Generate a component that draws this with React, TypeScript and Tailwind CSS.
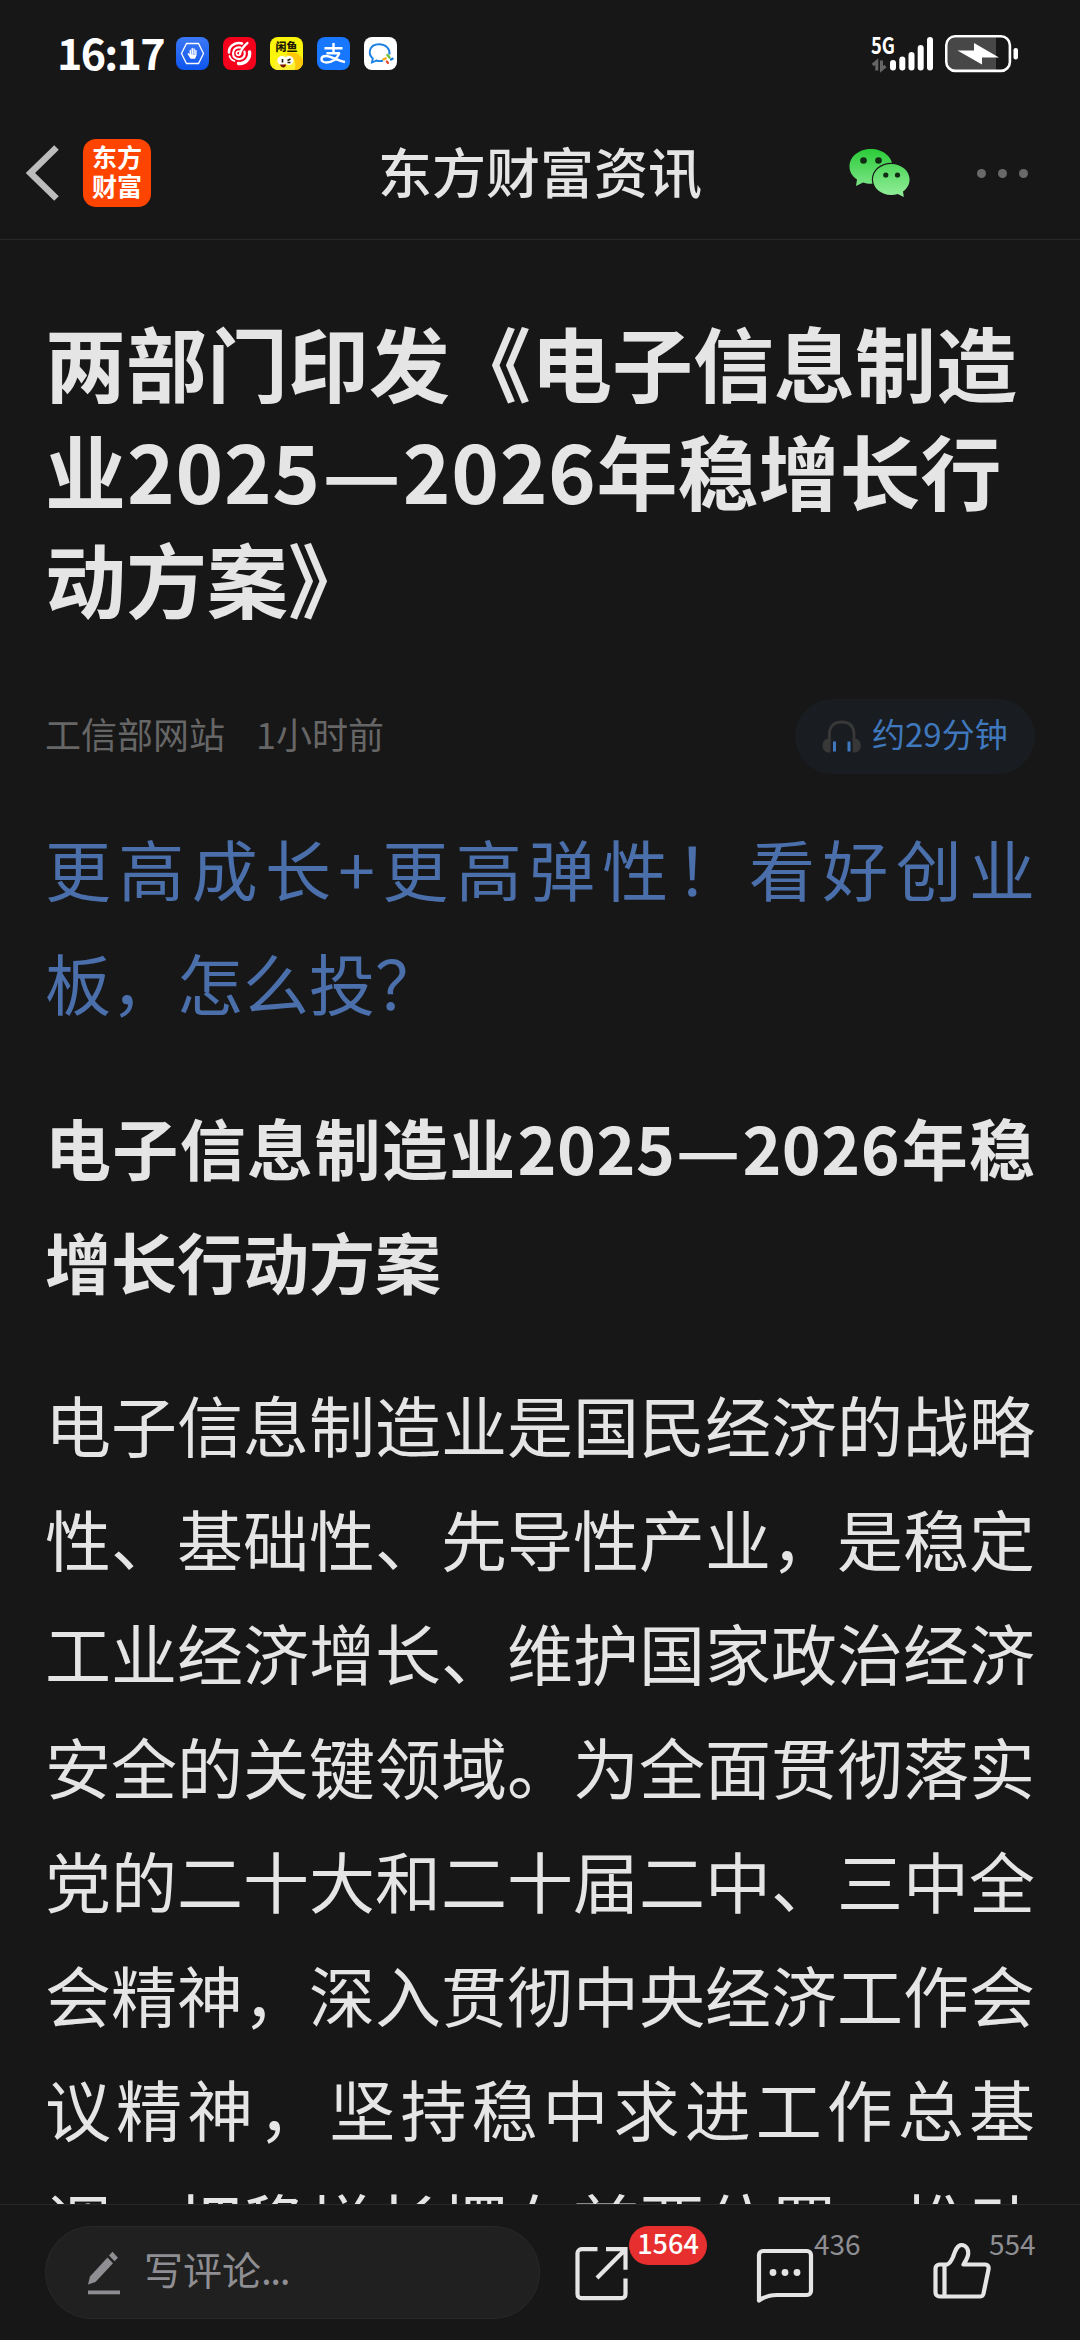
import type { ReactNode } from "react";

const TITLE = ["两部门印发《电子信息制造", "业2025—2026年稳增长行", "动方案》"];

const PROMO = ["更高成长+更高弹性！看好创业", "板，怎么投？"];

const HEADING = ["电子信息制造业2025—2026年稳", "增长行动方案"];

const BODY = [
  "电子信息制造业是国民经济的战略",
  "性、基础性、先导性产业，是稳定",
  "工业经济增长、维护国家政治经济",
  "安全的关键领域。为全面贯彻落实",
  "党的二十大和二十届二中、三中全",
  "会精神，深入贯彻中央经济工作会",
  "议精神，坚持稳中求进工作总基",
  "调，把稳增长摆在首要位置，推动",
];

function AppBadge({ className, children }: { className: string; children: ReactNode }) {
  return (
    <span className={`h-[33px] w-[33px] overflow-hidden rounded-[8px] ${className}`}>
      <svg viewBox="0 0 33 33" className="block h-full w-full">
        {children}
      </svg>
    </span>
  );
}

function StatusBar() {
  return (
    <div className="flex h-[107px] items-center">
      <span className="ml-[57px] w-[119px] pb-1 text-[43px] leading-none font-bold tracking-[-1.7px] text-white">
        16:17
      </span>
      <div className="flex gap-[14px]">
        <AppBadge className="bg-linear-to-b from-[#3b78f6] to-[#0c55ee]">
          <path d="M10.5 6.5h12l5 10-5 10h-12l-5-10z" fill="none" stroke="#fff" strokeWidth="1.3" />
          <path
            d="M14.300 19v-5.500M16.200 17v-5.500M18.100 17v-5M19.900 17.500v-4M12.300 16.800l2.700 4.200h3.600l1.300-3"
            fill="#fff"
            stroke="#fff"
            strokeWidth="1.4"
            strokeLinecap="round"
          />
        </AppBadge>
        <AppBadge className="bg-[#f5001c]">
          <g fill="none" stroke="#fff" strokeLinecap="round">
            <path d="M19 6.500C12 4.500 5.500 9.500 6 15.500" strokeWidth="2.600" />
            <path d="M6.500 19c1 3 3 4.500 5 5" strokeWidth="1.800" />
            <path d="M26.500 15c1 6-4 12.500-11 11.500" strokeWidth="3.400" />
            <path d="M17.500 10.500c-5-1-7.500 2.500-7.500 6 0 4 3.500 6 7 5.500 4-.5 5.500-4 4.500-7.500" strokeWidth="2.200" />
            <path d="M24.500 6c-4 3-6 6.500-7.500 10.500" strokeWidth="2.200" />
            <path d="M16.500 14c-2.500 0-3.500 1.500-3 3 .6 1.700 3 1.800 4 0" strokeWidth="1.700" />
          </g>
        </AppBadge>
        <AppBadge className="bg-[#fbf50b]">
          <circle cx="22" cy="27" r="11.500" fill="#fdc70a" />
          <circle cx="15" cy="28" r="10.500" fill="#fff033" />
          <circle cx="12" cy="23.500" r="4.500" fill="#fff" />
          <circle cx="19" cy="23.500" r="4.500" fill="#fff" />
          <path d="M12.500 22v3.500M17.500 23.500l3-1.500M17.500 25.500h3" stroke="#221a00" strokeWidth="1.600" />
          <path d="M10 27.500h6c0 3.800-5 4.300-6 0z" fill="#7a1408" />
          <text x="5.500" y="14.300" fontSize="11" fontWeight="900" fill="#221a00">
            闲鱼
          </text>
        </AppBadge>
        <AppBadge className="bg-[#1777ff]">
          <g fill="none" stroke="#fff" strokeWidth="2.400">
            <path d="M7.500 11.200h18M16.500 6v10M9.500 16.300h13.500" />
            <path d="M22.500 16c-3 6.500-8 9.500-13 9.500-3 0-5-1.300-5-3.300s2-3.200 4.500-3.200c5 0 11 4.500 19 6" />
          </g>
        </AppBadge>
        <AppBadge className="bg-white">
          <path
            d="M19 23.500c-2 .8-4.500.8-6.500 0l-4.500 2 .8-4C3.500 17 5 7.500 15 7.300c7.500 0 11.500 5.200 10.300 10.200"
            fill="none"
            stroke="#1b80e2"
            strokeWidth="1.900"
          />
          <path d="M23.500 18l2 2.500" stroke="#6bc235" strokeWidth="2.400" strokeLinecap="round" />
          <path d="M27 22.500l1.500-.8" stroke="#1777d6" strokeWidth="2.400" strokeLinecap="round" />
          <path d="M24 26l-1.200-1.500" stroke="#e5482d" strokeWidth="2.200" strokeLinecap="round" />
          <path d="M19.500 22.300l2.200-1" stroke="#fbb01c" strokeWidth="2.400" strokeLinecap="round" />
        </AppBadge>
      </div>
      <svg viewBox="0 0 64 36" className="mr-[10px] ml-auto h-9 w-16 shrink-0 overflow-visible">
        <text x="0" y="18" fontSize="23" fontWeight="700" fill="#fff" textLength="24" lengthAdjust="spacingAndGlyphs">
          5G
        </text>
        <g fill="none" stroke="#666" strokeWidth="3">
          <path d="M5.800 34.500v-9l-4 3.500M10.500 24.500v9l4-3.500" />
        </g>
        <g fill="#fff">
          <rect x="19" y="24" width="6" height="10.500" rx="3" />
          <rect x="28.300" y="20.500" width="6" height="14" rx="3" />
          <rect x="37.500" y="16" width="6" height="18.500" rx="3" />
          <rect x="46.700" y="9" width="6" height="25.500" rx="3" />
          <rect x="56" y="1" width="6" height="33.500" rx="3" />
        </g>
      </svg>
      <svg viewBox="0 0 74 38" className="mr-[61px] h-[38px] w-[74px] shrink-0">
        <path d="M11 2.500h40v33H11a8 8 0 0 1-8-8v-17a8 8 0 0 1 8-8z" fill="#474747" />
        <rect x="1.300" y="1.300" width="63.600" height="34.600" rx="9" fill="none" stroke="#fff" strokeWidth="2.600" />
        <rect x="68.500" y="13" width="4.500" height="11.500" rx="2.200" fill="#fff" />
        <path d="M12.500 15.500h16.500v-7.500l25 14.500H37v7z" fill="#fff" />
      </svg>
    </div>
  );
}

function NavBar() {
  return (
    <header className="flex h-[133px] items-center border-b border-[#282828]">
      <svg viewBox="0 0 34 58" className="ml-[26px] h-[58px] w-[34px]">
        <path d="M30.500 3.500 4.500 29l26 25.500" fill="none" stroke="#bcbcbc" strokeWidth="6.500" />
      </svg>
      <div className="ml-[23px] flex h-[68px] w-[68px] flex-col items-center justify-center rounded-[13px] bg-[#ff4400] pb-1 text-[25px] leading-[29px] font-bold text-white">
        <span>东方</span>
        <span>财富</span>
      </div>
      <h1 className="ml-[227px] pb-1 text-[54px] leading-none font-medium text-[#e5e5e5]">东方财富资讯</h1>
      <svg viewBox="0 0 62 50" className="ml-[147px] h-[50px] w-[62px]">
        <defs>
          <linearGradient id="wx-back" x1="0" y1="0" x2="0" y2="1">
            <stop offset="0" stopColor="#2acb38" />
            <stop offset="1" stopColor="#7ce586" />
          </linearGradient>
          <linearGradient id="wx-front" x1="0" y1="0" x2="0" y2="1">
            <stop offset="0" stopColor="#51d75c" />
            <stop offset="1" stopColor="#93ee9b" />
          </linearGradient>
        </defs>
        <path
          d="M22 1C10 1 .5 8.500.5 18.500c0 5.500 3 10 7.500 13L7 38l7-3.500c2.500.9 5 1.200 8 1.200 12 0 21.500-7.700 21.500-17.200S34 1 22 1z"
          fill="url(#wx-back)"
        />
        <ellipse cx="42.300" cy="31.500" rx="19.500" ry="16.800" fill="#171717" />
        <path
          d="M42.300 16C32 16 24 23 24 31.500S32 47 42.300 47c2.300 0 4.500-.3 6.500-1l6 3-.8-5.500c4-2.800 6.600-7 6.600-12C60.600 23 52.500 16 42.300 16z"
          fill="url(#wx-front)"
        />
        <g fill="#122b14">
          <circle cx="14.500" cy="12.500" r="3.300" />
          <circle cx="29.500" cy="12.500" r="3.300" />
          <circle cx="36.800" cy="27" r="2.600" />
          <circle cx="48.500" cy="27" r="2.600" />
        </g>
      </svg>
      <div className="ml-[66px] flex gap-3">
        <span className="h-[9px] w-[9px] rounded-full bg-[#696969]" />
        <span className="h-[9px] w-[9px] rounded-full bg-[#696969]" />
        <span className="h-[9px] w-[9px] rounded-full bg-[#696969]" />
      </div>
    </header>
  );
}

// years keep an even pitch, the dash between them fills a whole em
function Line({ text }: { text: string }) {
  return text.split(/(\d+|—)/).map((part, i) => {
    if (part === "—") {
      return (
        <span key={i} className="inline-block w-[1em] scale-x-[1.07] text-center [text-align-last:center]">
          —
        </span>
      );
    }
    if (/^\d/.test(part)) {
      return (
        <span key={i} className="inline-block pl-px tracking-[0.008em] [text-align-last:left]">
          {part}
        </span>
      );
    }
    return part;
  });
}

// every line but the last one stretches to the column edge
function Justified({ lines, className, open }: { lines: string[]; className: string; open?: boolean }) {
  return (
    <p className={`text-[66px] leading-[114px] ${className}`}>
      {lines.map((line, i) => (
        <span
          key={line}
          className={
            open || i < lines.length - 1
              ? "block whitespace-nowrap [text-align-last:justify]"
              : "block whitespace-nowrap"
          }
        >
          <Line text={line} />
        </span>
      ))}
    </p>
  );
}

function Meta() {
  return (
    <div className="mt-[68px] flex h-[75px] items-center text-[36px] leading-none text-[#666]">
      <span className="pb-[7px]">工信部网站</span>
      <span className="ml-[31px] pb-[7px]">1小时前</span>
      <div className="ml-auto flex h-[75px] w-[240px] items-center rounded-full bg-[#191c20] pl-[27px]">
        <svg viewBox="0 0 40 34" className="h-[34px] w-10">
          <path d="M7.300 22v-7C7.300 6 12 2 19.700 2S32 6 32 15v7" fill="none" stroke="#383838" strokeWidth="2.800" />
          <path d="M8.500 18.500v14C3.500 33 .5 30 .5 25.500s3-7.300 8-7zM30.800 18.500v14c5 .5 8-2.500 8-7s-3-7.300-8-7z" fill="#383838" />
          <path d="M12.500 21.500v10M27 21.500v10" stroke="#3f78bd" strokeWidth="3" />
        </svg>
        <span className="ml-[10px] pb-[7px] text-[33px] whitespace-nowrap text-[#3f78bd]">约29分钟</span>
      </div>
    </div>
  );
}

function ActionBar() {
  return (
    <footer className="flex h-[136px] shrink-0 items-start border-t border-[#282828] pl-[45px]">
      <div className="mt-[21px] flex h-[93px] w-[495px] items-center rounded-full border border-[#282828] bg-[#202020] pl-[42px]">
        <svg viewBox="0 0 32 44" className="h-11 w-8" fill="#8e8e93">
          <path d="M19.500 6.500l5.500 5.700L7.500 31 0 33.500l2-8z" />
          <path d="M21 4.500 24.500.8l5.500 6-3.500 3.500z" />
          <path d="M0 39.500h32v3.800H0z" />
        </svg>
        <span className="ml-6 pb-[8px] text-[39px] leading-none text-[#8e8e93]">
          写评论<span className="tracking-[-1.500px]">...</span>
        </span>
      </div>
      <div className="relative mt-[41px] ml-[35px] h-[56px] w-[54px]">
        <svg viewBox="0 0 54 56" className="h-[56px] w-[54px]" fill="none" stroke="#e5e5e5" strokeWidth="4.200">
          <path d="M22.500 3.200H6.500a4 4 0 0 0-4 4v41a4 4 0 0 0 4 4h40a4 4 0 0 0 4-4V32.500" />
          <path d="M31 3.200h19.500v20.500M50 3.700 22 32" />
        </svg>
        <span className="absolute top-[-20px] left-[54px] flex h-[39px] w-[78px] items-center justify-center rounded-full bg-[#e72f2f] pb-[6px] text-[27px] leading-none font-medium text-white">
          1564
        </span>
      </div>
      <div className="relative mt-[43px] ml-[127px] h-[56px] w-[58px]">
        <svg viewBox="0 0 58 56" className="h-[56px] w-[58px]" fill="none" stroke="#e5e5e5" strokeWidth="4.200" strokeLinejoin="round">
          <path d="M7 3h44a4 4 0 0 1 4 4v36a4 4 0 0 1-4 4H21C13 47 8 49 3 52.500V7a4 4 0 0 1 4-4z" />
          <g fill="#e5e5e5" stroke="none">
            <circle cx="17" cy="24.500" r="3.400" />
            <circle cx="29" cy="24.500" r="3.400" />
            <circle cx="41" cy="24.500" r="3.400" />
          </g>
        </svg>
        <span className="absolute top-[-19px] left-[58px] text-[28px] leading-none text-[#8e8e93]">436</span>
      </div>
      <div className="relative mt-[37px] ml-[119px] h-[58px] w-[58px]">
        <svg viewBox="0 0 58 58" className="h-[58px] w-[58px]" fill="none" stroke="#e5e5e5" strokeWidth="4.200" strokeLinejoin="round">
          <path d="M6.500 22.500H14c3-1 4.500-4 6-7.500 2-6 4-12 8.500-12s7.500 4.500 6.500 10c-.6 3.500-3 7-4.500 9.500H52c3 0 4 2 3.500 5l-5 24c-.6 2.500-1.500 3-4 3H6.500a4 4 0 0 1-4-4v-24a4 4 0 0 1 4-4z" />
          <path d="M11.500 22.500v32" />
        </svg>
        <span className="absolute top-[-13px] left-[56px] text-[28px] leading-none text-[#8e8e93]">554</span>
      </div>
    </footer>
  );
}

export default function App() {
  return (
    <div className="flex h-[2340px] w-[1080px] flex-col overflow-hidden bg-[#171717] font-['Noto_Sans_CJK_SC',sans-serif]">
      <StatusBar />
      <NavBar />
      <main className="min-h-0 flex-1 overflow-hidden px-[45px] pt-[67px]">
        <h2 className="text-[81px] leading-[108px] font-bold text-[#e5e5e5]">
          {TITLE.map((line) => (
            <span key={line} className="block whitespace-nowrap">
              <Line text={line} />
            </span>
          ))}
        </h2>
        <Meta />
        <Justified lines={PROMO} className="mt-[36px] text-[#4a6faa]" />
        <Justified lines={HEADING} className="mt-[51px] font-bold text-[#e5e5e5]" />
        <Justified lines={BODY} open className="mt-[49px] text-[#e5e5e5]" />
      </main>
      <ActionBar />
    </div>
  );
}
